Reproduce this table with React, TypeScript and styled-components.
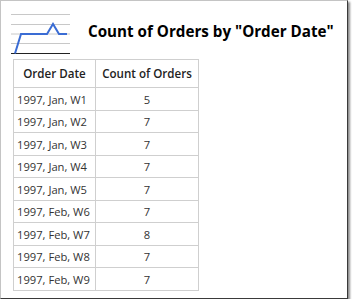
import React from "react";
import styled, { createGlobalStyle } from "styled-components";

const rows: [string, number][] = [
  ["1997, Jan, W1", 5],
  ["1997, Jan, W2", 7],
  ["1997, Jan, W3", 7],
  ["1997, Jan, W4", 7],
  ["1997, Jan, W5", 7],
  ["1997, Feb, W6", 7],
  ["1997, Feb, W7", 8],
  ["1997, Feb, W8", 7],
  ["1997, Feb, W9", 7],
];

const Chart = () => (
  <svg width="60" height="42" viewBox="0 0 60 42">
    {[1, 11, 20.5, 30].map((y) => (
      <line key={y} x1="0" x2="59" y1={y + 0.5} y2={y + 0.5} stroke="#c8c8c8" strokeWidth="1" />
    ))}
    <line x1="0" x2="59" y1="40.5" y2="40.5" stroke="#222" strokeWidth="1.2" />
    <polyline
      points="4,40.5 10,21 36,21 42,11 48,21 56,21"
      fill="none"
      stroke="#3a6cd4"
      strokeWidth="2"
      strokeLinejoin="miter"
    />
  </svg>
);

const App = () => {
  return (
    <>
      <GlobalStyle />
      <Frame>
        <Header>
          <Chart />
          <Title>Count of Orders by "Order Date"</Title>
        </Header>
        <Table>
          <colgroup>
            <col width={82} />
            <col width={103} />
          </colgroup>
          <thead>
            <tr>
              <Th>Order Date</Th>
              <Th>Count of Orders</Th>
            </tr>
          </thead>
          <tbody>
            {rows.map(([date, count], i) => (
              <tr key={date}>
                <Td tall={i % 2 === 0}>{date}</Td>
                <Td tall={i % 2 === 0} center>
                  {count}
                </Td>
              </tr>
            ))}
          </tbody>
        </Table>
      </Frame>
    </>
  );
};

export default App;

const GlobalStyle = createGlobalStyle`
  body {
    margin: 0;
    background: #fff;
  }
`;

const Frame = styled.div`
  box-sizing: border-box;
  width: 348px;
  height: 299px;
  background: #fff;
  border-left: 1px solid #c4c4c4;
  border-top: 1px solid #c4c4c4;
  border-right: 1px solid #3a3a3a;
  border-bottom: 1px solid #3a3a3a;
  box-shadow: 2px 2px 2px rgba(0, 0, 0, 0.45);
  padding: 12px 0 0 10px;
  font-family: "Open Sans", "Liberation Sans", sans-serif;
`;

const Header = styled.div`
  display: flex;
  align-items: center;
  gap: 17px;
  height: 42px;
`;

const Title = styled.div`
  font-size: 15.2px;
  font-weight: 700;
  color: #000;
  margin-top: -6px;
`;

const Table = styled.table`
  border-collapse: collapse;
  table-layout: fixed;
  width: 186px;
  margin: 4px 0 0 2px;
  font-size: 11.2px;
  color: #333;
`;

const Th = styled.th`
  border: 1px solid #cfcfcf;
  height: 27px;
  padding: 0;
  font-size: 11.6px;
  font-weight: 600;
  color: #222;
  text-align: center;
  white-space: nowrap;
`;

const Td = styled.td<{ center?: boolean; tall?: boolean }>`
  border: 1px solid #cfcfcf;
  height: ${({ tall }) => (tall ? "22px" : "21px")};
  padding: 0 3px;
  white-space: nowrap;
  text-align: ${({ center }) => (center ? "center" : "left")};
`;
